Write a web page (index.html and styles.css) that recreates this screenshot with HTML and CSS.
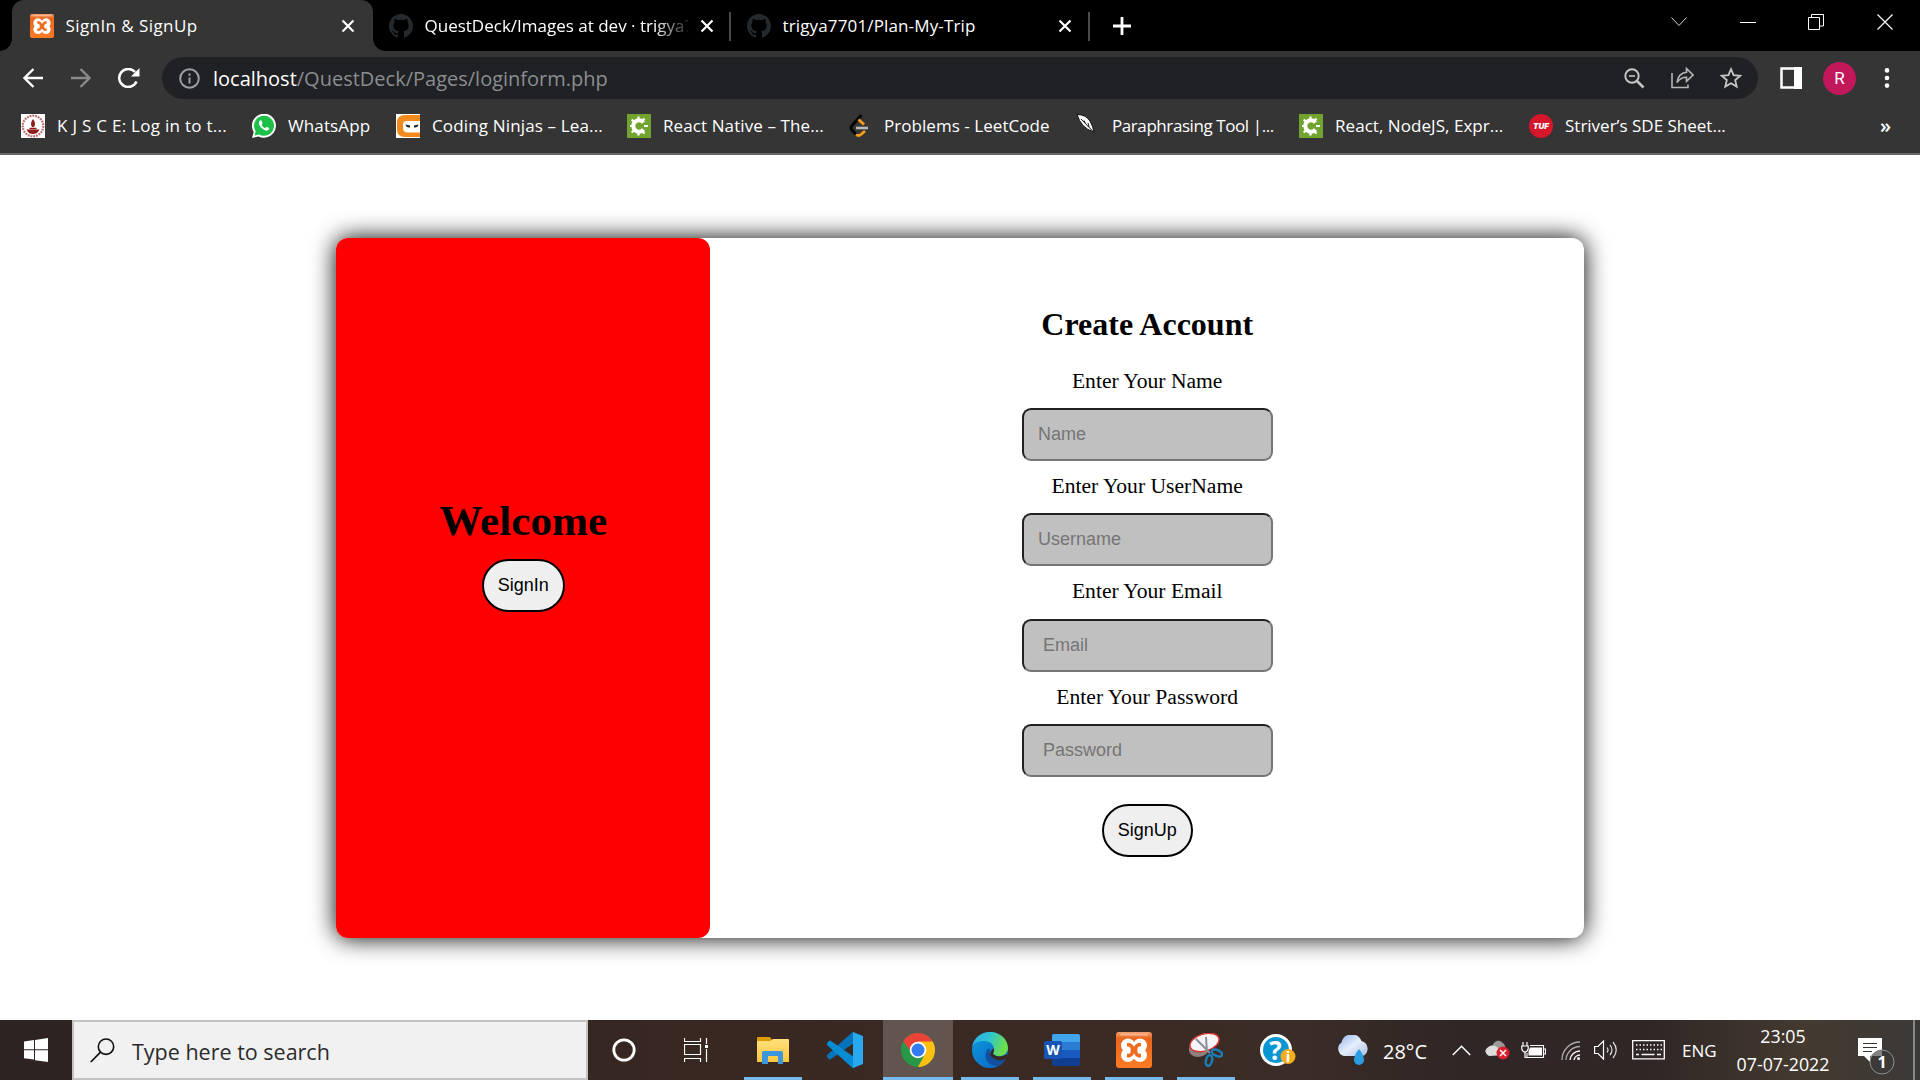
FILE: index.html
```html
<!DOCTYPE html>
<html lang="en">
<head>
<meta charset="utf-8">
<title>SignIn &amp; SignUp</title>
<link rel="stylesheet" href="styles.css">
</head>
<body>
<svg class="defs" width="0" height="0" aria-hidden="true">
  <defs>
    <linearGradient id="orange" x1="0" y1="0" x2="0" y2="1"><stop offset="0" stop-color="#f4a070"/><stop offset=".18" stop-color="#e8661c"/><stop offset="1" stop-color="#fb7a24"/></linearGradient>
    <linearGradient id="folder" x1="0" y1="0" x2="0" y2="1"><stop offset="0" stop-color="#ffe07d"/><stop offset="1" stop-color="#fbc63c"/></linearGradient>
    <linearGradient id="edgeTop" x1="0" y1="0" x2="1" y2=".3"><stop offset="0" stop-color="#2fa8e8"/><stop offset=".5" stop-color="#2fc3d2"/><stop offset="1" stop-color="#6be04c"/></linearGradient>
    <linearGradient id="edgeBase" x1="0" y1="0" x2="1" y2="1"><stop offset="0" stop-color="#0c9bdc"/><stop offset="1" stop-color="#0a62c4"/></linearGradient>
    <linearGradient id="cloud" x1="0" y1="0" x2="1" y2="1"><stop offset="0" stop-color="#8fb0ea"/><stop offset=".5" stop-color="#e6eefb"/><stop offset="1" stop-color="#a9bfe6"/></linearGradient>
  </defs>
  <symbol id="xampp" viewBox="0 0 36 36">
    <rect width="36" height="36" rx="3" fill="url(#orange)"/>
    <rect x="4" y="1.500" width="28" height="2" rx="1" fill="#f8b48e"/>
    <g fill="#fff"><circle cx="12" cy="13.500" r="7"/><circle cx="24" cy="13.500" r="7"/><circle cx="12" cy="23" r="7"/><circle cx="24" cy="23" r="7"/><path d="M8 13h20v10H8z"/></g>
    <path d="M11 12.800h2.500q3.500 1.500 3 5.400.5 3.900-3 5.400H11M25 12.800h-2.500q-3.500 1.500-3 5.400-.5 3.900 3 5.400H25" fill="none" stroke="#ee6c1f" stroke-width="3.600"/>
    <path d="M16 16h4v4.500h-4z" fill="#ee6c1f"/>
  </symbol>
  <symbol id="github" viewBox="0 0 16 16">
    <path fill="#24292e" d="M8 0C3.580 0 0 3.580 0 8c0 3.540 2.290 6.530 5.470 7.590.4.070.55-.17.55-.38 0-.19-.01-.82-.01-1.490-2.010.37-2.530-.49-2.690-.94-.09-.23-.48-.94-.82-1.130-.28-.15-.68-.52-.01-.53.63-.01 1.080.58 1.230.82.72 1.210 1.870.87 2.330.66.070-.52.28-.87.51-1.070-1.780-.2-3.640-.89-3.640-3.950 0-.87.31-1.590.82-2.150-.08-.2-.36-1.020.08-2.120 0 0 .67-.21 2.200.82a7.500 7.500 0 0 1 4 0c1.530-1.040 2.200-.82 2.200-.82.44 1.100.16 1.920.08 2.120.51.560.82 1.270.82 2.150 0 3.070-1.870 3.750-3.650 3.950.29.250.54.730.54 1.480 0 1.070-.01 1.930-.01 2.200 0 .21.15.46.55.38A8 8 0 0 0 16 8c0-4.420-3.580-8-8-8Z"/>
  </symbol>
  <symbol id="close" viewBox="0 0 14 14"><path d="M1.500 1.500l11 11M12.500 1.500l-11 11" stroke="#fff" stroke-width="2.200"/></symbol>
  <symbol id="geeks" viewBox="0 0 24 24">
    <rect width="24" height="24" fill="#71a32e"/>
    <path d="M16.500 8.500A5.700 5.700 0 1 0 16.500 15.500" fill="none" stroke="#fff" stroke-width="4"/>
    <path d="M11.500 2.500v4M11.500 17.500v4M3 12h3M4.700 5.500l3 3M4.700 18.500l3-3M17.500 4.500l-3 3M17.500 19.500l-3-3M17 12h4" stroke="#fff" stroke-width="2.200"/>
  </symbol>
</svg>

<div class="screen">
  <header class="browser">
    <div class="tabstrip">
      <div class="tab tab-active">
        <svg class="favicon"><use href="#xampp"/></svg>
        <span class="tab-title title-sign">SignIn &amp; SignUp</span>
        <svg class="tab-close"><use href="#close"/></svg>
      </div>
      <div class="tab tab-quest">
        <svg class="favicon"><use href="#github"/></svg>
        <span class="tab-title title-fade">QuestDeck/Images at dev · trigya7701</span>
        <svg class="tab-close"><use href="#close"/></svg>
      </div>
      <div class="tab tab-trip">
        <svg class="favicon"><use href="#github"/></svg>
        <span class="tab-title title-trip">trigya7701/Plan-My-Trip</span>
        <svg class="tab-close"><use href="#close"/></svg>
      </div>
      <svg class="new-tab" viewBox="0 0 18 18"><path d="M9 0v18M0 9h18" stroke="#fff" stroke-width="2.800"/></svg>
      <div class="window-controls">
        <svg width="16" height="10" viewBox="0 0 16 10"><path d="M.5.5L8 8.500 15.500.5" fill="none" stroke="#d8d8d8"/></svg>
        <svg width="16" height="16" viewBox="0 0 16 16"><path d="M0 8.500h16" stroke="#fff"/></svg>
        <svg width="16" height="16" viewBox="0 0 16 16"><path d="M.5 3.500h11v12H.5zM3.500 3.500v-3h12v11.500h-4" fill="none" stroke="#fff"/></svg>
        <svg width="16" height="16" viewBox="0 0 16 16"><path d="M.5.5l15 15M15.500.5l-15 15" stroke="#fff" stroke-width="1.200"/></svg>
      </div>
    </div>

    <div class="toolbar">
      <div class="nav">
        <svg width="20" height="20" viewBox="0 0 20 20"><path d="M20 10H2M10.500 1L1.500 10l9 9" fill="none" stroke="#fff" stroke-width="2.300"/></svg>
        <svg width="20" height="20" viewBox="0 0 20 20"><path d="M0 10h18M9.500 1l9 9-9 9" fill="none" stroke="#8a8a8a" stroke-width="2.300"/></svg>
        <svg width="22" height="20" viewBox="0 0 22 20"><path d="M18.500 13.500A9 9 0 1 1 17 4" fill="none" stroke="#fff" stroke-width="2.500"/><path d="M21.500 0v8.500H13z" fill="#fff"/></svg>
      </div>
      <div class="address">
        <svg width="21" height="21" viewBox="0 0 21 21"><circle cx="10.500" cy="10.500" r="9.300" fill="none" stroke="#9aa0a6" stroke-width="2"/><path d="M10.500 9.500v6M10.500 5.500v2.300" stroke="#9aa0a6" stroke-width="2"/></svg>
        <span class="url"><b>localhost</b>/QuestDeck/Pages/loginform.php</span>
        <div class="address-actions">
          <svg width="21" height="21" viewBox="0 0 21 21"><circle cx="8" cy="8" r="6.700" fill="none" stroke="#c4c7c5" stroke-width="1.900"/><path d="M13 13l6.500 6.500" stroke="#c4c7c5" stroke-width="2.500"/><path d="M5 8h6" stroke="#c4c7c5" stroke-width="1.600"/></svg>
          <svg width="23" height="22" viewBox="0 0 23 22"><path d="M1 6v14.500h16v-3M15.500 1.500l6.500 6.500-6.500 6.300v-4C11 10.300 8.300 12 6 15.500 6.800 9.500 9.500 6 15.500 5.300Z" fill="none" stroke="#b4b6b8" stroke-width="1.600"/></svg>
          <svg width="22" height="22" viewBox="0 0 22 22"><path d="M11 2.200l2.600 6 6.600.6-5 4.300 1.500 6.500L11 16.200l-5.700 3.400 1.500-6.500-5-4.300 6.600-.6Z" fill="none" stroke="#c4c7c5" stroke-width="1.800"/></svg>
        </div>
      </div>
      <svg class="side-panel" viewBox="0 0 22 22"><path d="M1.500 1.500h19v19h-19z" fill="none" stroke="#fff" stroke-width="2.500"/><path d="M14 0h8v22h-8z" fill="#fff"/></svg>
      <span class="avatar">R</span>
      <svg class="menu" viewBox="0 0 6 20"><circle cx="3" cy="2.400" r="2.300" fill="#fff"/><circle cx="3" cy="10" r="2.300" fill="#fff"/><circle cx="3" cy="17.600" r="2.300" fill="#fff"/></svg>
    </div>

    <nav class="bookmarks">
      <a class="bm bm-kjsce"><svg viewBox="0 0 24 24"><rect width="24" height="24" fill="#fff"/><circle cx="12" cy="12" r="10.300" fill="none" stroke="#b86a6a" stroke-width="2.200" stroke-dasharray="1.800 1"/><path d="M5.500 15.500h13q-2 4.500-6.500 4.500t-6.500-4.500ZM12 5q3.500 4.500 1 8h-2q-2.500-3.500 1-8Z" fill="#8f1c1c"/><path d="M8.500 14.500h7" stroke="#8f1c1c" stroke-width="1.500"/></svg><span>K J S C E: Log in to t...</span></a>
      <a class="bm bm-whatsapp"><svg viewBox="0 0 24 24"><path d="M0 24l1.700-6A12 12 0 1 1 6.500 22.400Z" fill="#fff"/><path d="M2.500 21.500l1.200-4.200A10 10 0 1 1 7 20.400Z" fill="#1fc04a"/><path d="M8.500 6.300q-1.800.7-1.700 3 .6 4.600 6.700 7.200 3 .7 3.900-2.200L14.500 12.800l-1.400 1.500Q10.800 13.300 9.600 11l1-1.300-1-3.200Z" fill="#fff"/></svg><span>WhatsApp</span></a>
      <a class="bm bm-ninjas"><svg viewBox="0 0 24 24"><rect width="24" height="24" fill="#fff"/><path d="M24 1H9Q1 1 1 9v6q0 8 8 8h15v-4.500H12q-5 0-5-4.500v-4q0-3 4-3h13Z" fill="#f08a1d"/><path d="M8.500 8.500H24v7H8.500q-2-3.500 0-7z" fill="#fff"/><path d="M9.500 10.500l4.500 1v2q-4 .5-4.500-3zM22.500 10.500l-4.500 1v2q4 .5 4.500-3z" fill="#222"/></svg><span>Coding Ninjas – Lea...</span></a>
      <a class="bm bm-native"><svg><use href="#geeks"/></svg><span>React Native – The...</span></a>
      <a class="bm bm-leetcode"><svg viewBox="0 0 24 24"><path d="M13.500 1L4 11.500q-2 2.500 0 4.500l4.500 5" fill="none" stroke="#050505" stroke-width="3"/><path d="M10.500 5.500l5.500 5M8 20.500q2.500 2 5 0l4-3.500" fill="none" stroke="#f7a01b" stroke-width="2.800"/><path d="M8 14h12" stroke="#b8b8b8" stroke-width="2.600"/></svg><span>Problems - LeetCode</span></a>
      <a class="bm bm-quill"><svg viewBox="0 0 24 24"><path d="M1 .5q9 0 13 6.500 3 5 4 11-7-2-11-6.500Q3 7 1 .5Z" fill="#f6f6f6" stroke="#111"/><path d="M5 5l15 15.500M8 6.500l1.500 3M12 9l1 4" fill="none" stroke="#222"/></svg><span>Paraphrasing Tool |...</span></a>
      <a class="bm bm-node"><svg><use href="#geeks"/></svg><span>React, NodeJS, Expr...</span></a>
      <a class="bm bm-striver"><i class="tuf">TUF</i><span>Striver’s SDE Sheet...</span></a>
      <span class="more">»</span>
    </nav>
  </header>

  <main class="page">
    <section class="card">
      <div class="welcome">
        <h1>Welcome</h1>
        <button type="button">SignIn</button>
      </div>
      <form class="signup">
        <h2>Create Account</h2>
        <label for="name">Enter Your Name</label>
        <input id="name" type="text" placeholder="Name">
        <label for="username">Enter Your UserName</label>
        <input id="username" type="text" placeholder="Username">
        <label for="email">Enter Your Email</label>
        <input id="email" type="text" placeholder=" Email">
        <label for="password">Enter Your Password</label>
        <input id="password" type="password" placeholder=" Password">
        <button type="button">SignUp</button>
      </form>
    </section>
  </main>

  <footer class="taskbar">
    <div class="start"><svg width="24" height="24" viewBox="0 0 24 24"><path d="M0 3.500l10-1.400v9.200H0zM11 2l13-2v11.300H11zM0 12.300h10v9.300L0 20.300zM11 12.300h13V24l-13-1.800z" fill="#fff"/></svg></div>
    <div class="search">
      <svg width="25" height="25" viewBox="0 0 25 25"><circle cx="16" cy="8.700" r="7.700" fill="none" stroke="#111" stroke-width="1.600"/><path d="M10.500 14.200L.8 24" stroke="#111" stroke-width="1.700"/></svg>
      <span>Type here to search</span>
    </div>
    <div class="apps">
      <div class="app"><svg width="24" height="24" viewBox="0 0 24 24"><circle cx="12" cy="12" r="10.200" fill="none" stroke="#fff" stroke-width="2.800"/></svg></div>
      <div class="app"><svg width="24" height="24" viewBox="0 0 24 24"><path d="M.5 0v3.500h16V0M.5 6.500h16v10H.5zM.5 24v-3.500h16V24M22.500 0v6M22.500 11v13" fill="none" stroke="#fff" stroke-width="1.200"/><path d="M21 7h3v3h-3z" fill="#fff"/></svg></div>
      <div class="app app-files open"><svg width="32" height="27" viewBox="0 0 32 27"><path d="M0 6V1q0-1 1-1h12l2 3v4z" fill="#dd9b00"/><path d="M0 4h13l3-2h15q1 0 1 1v22H0z" fill="url(#folder)"/><path d="M5 27V16q0-2 2-2h17q2 0 2 2v11h-5v-8H11v8z" fill="#3b96dd"/></svg></div>
      <div class="app app-code"><svg width="36" height="36" viewBox="0 0 36 36"><path d="M27 0v11L4 27q-1 1-2 0l-2-2v-2L25 .5z" fill="#0073bb"/><path d="M27 36V25L4 9Q3 8 2 9l-2 2v2l25 22.500z" fill="#078bd3"/><path d="M26 0l10 4v28l-10 4z" fill="#29a8f2"/></svg></div>
      <div class="app active open"><svg width="34" height="34" viewBox="0 0 34 34"><circle cx="17" cy="17" r="17" fill="#279847"/><path d="M2.300 8.500A17 17 0 0 1 31.700 8.500L17 10 11 20z" fill="#ea4335"/><path d="M31.700 8.500A17 17 0 0 1 17 34l7-13-7-12.500z" fill="#fcbf12"/><circle cx="17" cy="17" r="8.300" fill="#fff"/><circle cx="17" cy="17" r="6.500" fill="#347df0"/></svg></div>
      <div class="app app-edge open"><svg width="36" height="36" viewBox="0 0 36 36"><circle cx="18" cy="18" r="18" fill="url(#edgeBase)"/><path d="M0 15C2 5 10 0 18 0c11 0 18 8 18 16 0 7-8 10-14 7q-2-1 0-4C23 13 18 9 12 9 6 9 2 11 0 15Z" fill="url(#edgeTop)"/><path d="M15 18c-4 7 1 16 10 16 3-1 7-4 9-7-9 3-18 0-16-10q-2-1-3 1Z" fill="#124f9e"/><path d="M21 22q6 5 14 0 1 2-1 5-10 4-16-4 0-4 4-7 0 4-1 6Z" fill="#392822"/></svg></div>
      <div class="app open"><svg width="36" height="32" viewBox="0 0 36 32"><rect x="8" width="28" height="32" rx="2" fill="#103f91"/><path d="M8 8V2q0-2 2-2h24q2 0 2 2v6z" fill="#41a5ee"/><path d="M8 8h28v8H8z" fill="#2b7cd3"/><path d="M8 16h28v8H8z" fill="#185abd"/><rect y="7" width="18" height="18" rx="1.500" fill="#1854b4"/><text x="9" y="20.500" text-anchor="middle" class="word-mark">W</text></svg></div>
      <div class="app open"><svg width="36" height="36"><use href="#xampp"/></svg></div>
      <div class="app open"><svg width="34" height="34" viewBox="0 0 34 34"><path d="M0 14q-1 9 8 10 9 0 12-7z" fill="#8c7f7c"/><ellipse cx="15.500" cy="9.500" rx="15" ry="8.500" transform="rotate(-17 15.500 9.500)" fill="#f5f5f7" stroke="#d73434" stroke-width="1.500"/><path d="M7 6l14 14M17 4l1 15" stroke="#8b9096" stroke-width="2"/><ellipse cx="28" cy="20" rx="5.500" ry="3" transform="rotate(25 28 20)" fill="none" stroke="#187fb8" stroke-width="2.500"/><ellipse cx="20" cy="27.500" rx="3" ry="5.500" transform="rotate(15 20 27.500)" fill="none" stroke="#187fb8" stroke-width="2.500"/></svg></div>
      <div class="app"><svg class="help" width="36" height="32" viewBox="0 0 36 32"><circle cx="16" cy="16" r="16" fill="#fff"/><circle cx="16" cy="16" r="13" fill="#0795d4"/><text x="15.500" y="25.500" text-anchor="middle" class="help-mark">?</text><circle cx="28" cy="22.500" r="7.500" fill="#f3ad1e"/><text x="28" y="28" text-anchor="middle" class="info-mark">i</text></svg></div>
    </div>
    <div class="tray">
      <svg class="weather" width="34" height="30" viewBox="0 0 34 30"><path d="M8 21A7.500 7.500 0 0 1 5.500 7.500 10.500 10.500 0 0 1 25.500 6 8 8 0 0 1 27 21z" fill="url(#cloud)"/><path d="M23 14q5 6 5 11a5 5 0 0 1-10 0q0-5 5-11Z" fill="#2b9ee3"/></svg>
      <span class="temp">28°C</span>
      <svg class="chevron" width="19" height="11" viewBox="0 0 19 11"><path d="M.8 10L9.500 1.200l8.700 8.800" fill="none" stroke="#fff" stroke-width="1.500"/></svg>
      <svg class="onedrive" width="25" height="20" viewBox="0 0 25 20"><path d="M8 4q5-7 11 0 2 3 1 6l-9 5z" fill="#999"/><path d="M4 16Q-2 12 2 8q5-5 10-1l8 8z" fill="#ddd"/><circle cx="18" cy="13" r="6.500" fill="#d9202e"/><path d="M15 10l6 6M21 10l-6 6" stroke="#fff" stroke-width="1.500"/></svg>
      <svg class="battery" width="25" height="17" viewBox="0 0 25 17"><path d="M2 0v4M6 0v4M.8 4h6.400v3q-1 3-3.200 3T.8 7zM4 10v5.500h2" fill="none" stroke="#fff" stroke-width="1.200"/><path d="M9 3.500h13.500v12H6V11M23 7h1.500v5H23" fill="none" stroke="#fff" stroke-width="1.100"/><path d="M9 5.500h12v8H7.500v-4z" fill="#fff"/></svg>
      <svg class="wifi" width="20" height="19" viewBox="0 0 20 19"><path d="M1 19A18 18 0 0 1 19 1M5 19A14 14 0 0 1 19 5.500" fill="none" stroke="#aaa" stroke-width="1.300"/><path d="M9 19A10 10 0 0 1 19 10M13 19a6 6 0 0 1 6-5" fill="none" stroke="#fff" stroke-width="1.300"/><circle cx="17.500" cy="17.500" r="1.500" fill="#fff"/></svg>
      <svg class="volume" width="24" height="20" viewBox="0 0 24 20"><path d="M.6 6.500H4L9.500 1v18L4 13.500H.6z" fill="none" stroke="#fff" stroke-width="1.200"/><path d="M13 7.500q2 2.500 0 5M16 4.800q4 5.200 0 10.400M19 2q6.500 8 0 16" fill="none" stroke="#ddd" stroke-width="1.200"/></svg>
      <svg class="keyboard" width="33" height="20" viewBox="0 0 33 20"><path d="M.7.7h31.600v18.200H.7z" fill="none" stroke="#fff" stroke-width="1.300"/><path d="M4 5h26M4 9.500h26" stroke="#fff" stroke-width="1.400" stroke-dasharray="1.500 2"/><path d="M4 14.500h3M9.500 14.500h13M25 14.500h4" stroke="#fff" stroke-width="1.300"/></svg>
      <span class="lang">ENG</span>
      <div class="clock"><span class="time">23:05</span><span class="date">07-07-2022</span></div>
      <svg class="notify" width="37" height="37" viewBox="0 0 37 37"><path d="M0 0h24v18H12v6l-6-6H0z" fill="#fff"/><path d="M5 5.500h14M5 9.500h14M5 13.500h9" stroke="#3a3430" stroke-width="1.200"/><circle cx="24" cy="24" r="12" fill="#3b3a38" stroke="#909090"/><path d="M12 24A12 12 0 0 1 24 12v6H12z" fill="#858381"/><text x="24" y="30" text-anchor="middle" class="count">1</text></svg>
      <i class="peek"></i>
    </div>
  </footer>
</div>
</body>
</html>
```
FILE: styles.css
```css
* { box-sizing: border-box; }
body { margin: 0; background: #fff; overflow: hidden; }
.defs { display: block; position: absolute; }
.screen {
  width: 1920px; height: 1080px;
  display: grid; grid-template-rows: 155px 865px 60px;
  font-family: "Open Sans", "Noto Sans", sans-serif; color: #fff;
}
.screen svg { flex: none; display: block; }

/* Browser chrome */
.browser { background: #353535; border-bottom: 2px solid #696969; display: grid; grid-template-rows: 51px 54px 48px; }
.tabstrip { background: #000; display: flex; padding-left: 12px; }
.tab { height: 51px; display: flex; align-items: center; flex: none; font-size: 17px; white-space: nowrap; }
.tab-active { width: 361px; padding-left: 18px; background: #353535; border-radius: 12px 12px 0 0; position: relative; }
.tab-active::before, .tab-active::after {
  content: ""; position: absolute; bottom: 0; width: 12px; height: 12px;
}
.tab-active::before { left: -12px; background: radial-gradient(circle at 0 0, transparent 11.5px, #353535 12px); }
.tab-active::after { right: -12px; background: radial-gradient(circle at 100% 0, transparent 11.5px, #353535 12px); }
.tab-quest, .tab-trip { width: 358px; padding-left: 16px; background: linear-gradient(#4a4a4a, #4a4a4a) right 0 top 12px / 2px 29px no-repeat; }
.tab-trip { width: 359px; }
.favicon { width: 24px; height: 24px; margin-right: 11.500px; }
.tab-title { overflow: hidden; width: 263px; }
.title-sign { letter-spacing: .42px; }
.title-trip { letter-spacing: .14px; }
.title-fade { -webkit-mask-image: linear-gradient(90deg, #000 87%, transparent 102%); mask-image: linear-gradient(90deg, #000 87%, transparent 102%); }
.tab-close { width: 14px; height: 14px; margin-left: 12px; }
.new-tab { width: 18px; height: 18px; margin: 17px 0 0 23px; }
.window-controls { margin: 13px 27px 0 auto; display: flex; gap: 52.700px; height: 17px; align-items: center; }

.toolbar { display: flex; align-items: center; }
.nav { width: 162px; padding-left: 23px; display: flex; gap: 27.500px; }
.address { width: 1596px; height: 42px; border-radius: 21px; background: #202124; display: flex; align-items: center; padding: 0 16px 0 17px; flex: none; }
.url { margin-left: 13px; font-size: 20px; color: #8b8d90; white-space: nowrap; }
.url b { font-weight: 400; color: #fff; }
.address-actions { margin-left: auto; display: flex; gap: 26px; align-items: center; }
.side-panel { width: 22px; height: 22px; margin-left: 22px; }
.avatar { width: 33px; height: 33px; border-radius: 50%; background: #c2185b; margin-left: 21px; display: grid; place-items: center; font: 17px Roboto, sans-serif; }
.menu { width: 6px; height: 20px; margin-left: 28px; }

.bookmarks { display: flex; align-items: center; padding: 0 29px 7px 21px; font-size: 17px; height: 48px; white-space: nowrap; }
.bm { display: flex; align-items: center; gap: 12px; height: 24px; flex: none; }
.bm svg, .tuf { width: 24px; height: 24px; }
.bm-kjsce { width: 231px; letter-spacing: .28px; }
.bm-whatsapp { width: 144px; letter-spacing: .12px; }
.bm-ninjas { width: 231px; letter-spacing: .15px; }
.bm-native { width: 221px; letter-spacing: .1px; }
.bm-leetcode { width: 228px; letter-spacing: .05px; }
.bm-quill { width: 223px; letter-spacing: -.42px; }
.bm-node { width: 230px; letter-spacing: .05px; }
.tuf { border-radius: 50%; background: #d5162b; display: grid; place-items: center; font: italic 900 8px Inter, sans-serif; }
.more { margin-left: auto; font-size: 20px; font-weight: 600; }

/* Sign-up page */
.page { display: flex; justify-content: center; align-items: flex-start; padding-top: 83px; background: #fff; color: #000; }
.card { width: 1248px; height: 700px; display: flex; border-radius: 12px; background: #fff; box-shadow: 0 0 24px #000; }
.welcome { width: 374.400px; background: #f00; border-radius: 12px; display: flex; flex-direction: column; align-items: center; padding-top: 257.500px; }
.card h1, .card h2, .card label { font-family: "Liberation Serif", serif; }
.card h1 { margin: 0 0 11.500px; font-size: 43.200px; line-height: 50px; height: 52px; }
.card button { height: 53px; padding: 0 14px; border: 2px solid #000; border-radius: 27px; background: #efefef; color: #000; font: 18px "Liberation Sans", sans-serif; }
.signup { flex: 1; display: flex; flex-direction: column; align-items: center; padding-top: 69px; }
.card h2 { margin: 0 0 27.700px; font-size: 32px; line-height: 34px; }
.signup label { font-size: 21.6px; line-height: 24px; height: 25px; margin-bottom: 14.300px; }
.signup input { width: 251px; height: 53px; margin: 0 0 13px; padding: 0 14.400px; border: 2px inset #767676; border-radius: 9px; background: #c0c0c0; font: 18px "Liberation Sans", sans-serif; }
.signup input::placeholder { color: #757575; }
.signup button { margin-top: 14px; }

/* Taskbar */
.taskbar { display: flex; background: linear-gradient(90deg, #2d2322 0, #392822 38%, #3b2b24 60%, #3a2c27 68%, #302625 76%, #302625 86%, #443a30 94%, #3b3937 100%); }
.start { width: 72px; display: grid; place-items: center; }
.search { width: 516px; border: 2px solid #c3c3c3; background: #f1f1f1; color: #2b2b2b; display: flex; align-items: center; padding-left: 15.500px; }
.search span { margin: 3px 0 0 17.500px; font-size: 21.500px; }
.apps { display: flex; width: 726px; flex: none; }
.app { display: grid; place-items: center; width: 72px; height: 60px; position: relative; }
.app-files { width: 81px; }
.app-code { width: 70px; padding-right: 6px; }
.app-edge { width: 73px; }
.open::after { content: ""; position: absolute; bottom: 0; left: 50%; width: 58px; margin-left: -29px; height: 3px; background: #76b9ed; }
.active { width: 70px; background: #62554f; }
.active::after { width: 70px; margin-left: -35px; }
.help { overflow: visible; }
.word-mark { font: bold 14px "Open Sans", sans-serif; fill: #fff; }
.help-mark { font: bold 26px "Open Sans", sans-serif; fill: #fff; }
.info-mark { font: bold 15px "Open Sans", sans-serif; fill: #fff; }
.count { font: bold 16px "Open Sans", sans-serif; fill: #fff; }
.tray { display: flex; align-items: center; flex: 1; padding-left: 22px; font-size: 17px; white-space: nowrap; }
.temp { width: 44px; margin: 3px 25px 0 13px; font-size: 20px; }
.onedrive { margin-left: 14px; }
.battery { margin-left: 11px; }
.wifi { margin-left: 15px; }
.volume { margin-left: 13px; }
.keyboard { margin-left: 14px; }
.lang { width: 34px; margin-left: 17px; }
.clock { width: 94px; margin-left: 20px; display: flex; flex-direction: column; align-items: center; line-height: 28px; font-size: 17.800px; }
.notify { margin: 12px 0 0 28px; }
.peek { width: 2px; height: 60px; background: #8a8785; margin-left: 18px; }
```
